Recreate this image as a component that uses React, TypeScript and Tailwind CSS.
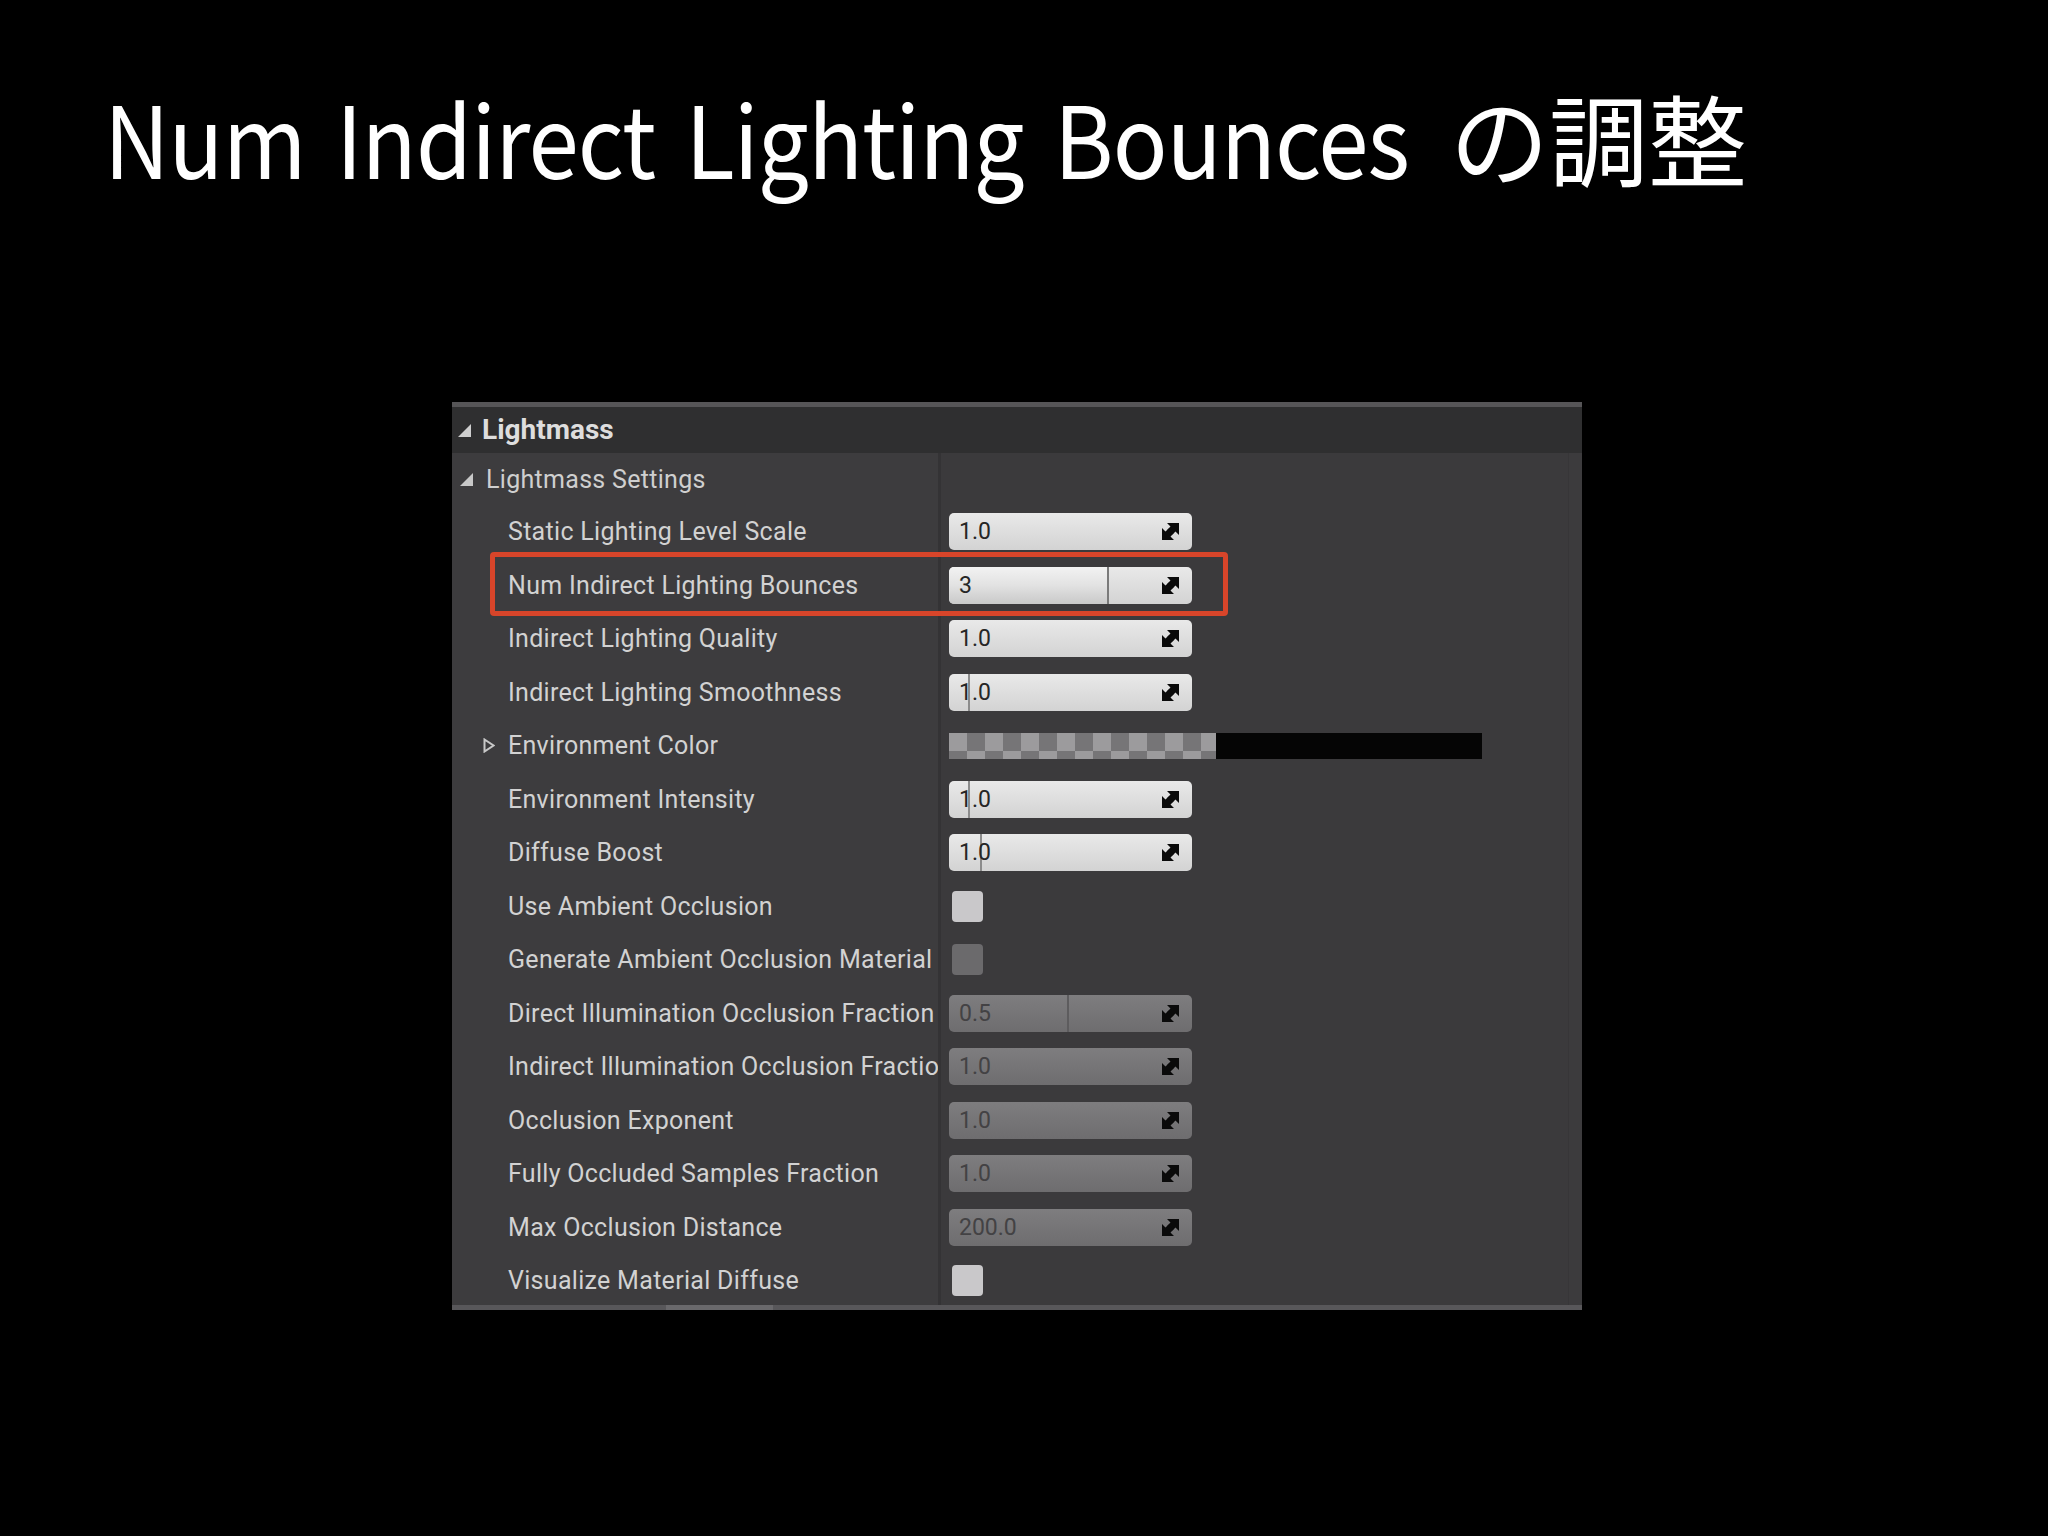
import React from "react";

type Row =
  | { kind: "num"; label: string; value: string; disabled?: boolean; mark?: number; fill?: number }
  | { kind: "check"; label: string; light: boolean }
  | { kind: "color"; label: string };

const rows: Row[] = [
  { kind: "num", label: "Static Lighting Level Scale", value: "1.0" },
  { kind: "num", label: "Num Indirect Lighting Bounces", value: "3", fill: 160 },
  { kind: "num", label: "Indirect Lighting Quality", value: "1.0" },
  { kind: "num", label: "Indirect Lighting Smoothness", value: "1.0", mark: 19 },
  { kind: "color", label: "Environment Color" },
  { kind: "num", label: "Environment Intensity", value: "1.0", mark: 19 },
  { kind: "num", label: "Diffuse Boost", value: "1.0", mark: 31 },
  { kind: "check", label: "Use Ambient Occlusion", light: true },
  { kind: "check", label: "Generate Ambient Occlusion Material", light: false },
  { kind: "num", label: "Direct Illumination Occlusion Fraction", value: "0.5", disabled: true, mark: 118 },
  { kind: "num", label: "Indirect Illumination Occlusion Fraction", value: "1.0", disabled: true },
  { kind: "num", label: "Occlusion Exponent", value: "1.0", disabled: true },
  { kind: "num", label: "Fully Occluded Samples Fraction", value: "1.0", disabled: true },
  { kind: "num", label: "Max Occlusion Distance", value: "200.0", disabled: true },
  { kind: "check", label: "Visualize Material Diffuse", light: true },
];

function DragIcon() {
  return (
    <svg width="19" height="19" viewBox="0 0 19 19" className="shrink-0">
      <polygon points="6,1 18,1 18,13 14.5,9.5 11.5,12.5 6.5,7.5 9.5,4.5" fill="#0a0a0a" />
      <polygon points="1,6 1,18 13,18 9.5,14.5 12.5,11.5 7.5,6.5 4.5,9.5" fill="#0a0a0a" />
    </svg>
  );
}

function NumBox({ value, disabled, mark, fill }: { value: string; disabled?: boolean; mark?: number; fill?: number }) {
  const base = disabled
    ? "bg-gradient-to-b from-[#7e7d7f] to-[#6e6d6f] text-[#434244]"
    : "bg-gradient-to-b from-[#e9e9e9] to-[#d3d3d3] text-[#262626]";
  return (
    <div className={`relative w-[243px] h-[37px] rounded-[5px] overflow-hidden flex items-center ${base}`}>
      {fill !== undefined && (
        <div
          className="absolute left-0 top-0 bottom-0 bg-gradient-to-b from-[#f2f2f2] via-[#e2e2e2] to-[#c9c9c9] border-r-2 border-[#7a7a7a]"
          style={{ width: fill }}
        />
      )}
      {mark !== undefined && (
        <div
          className={`absolute top-0 bottom-0 w-[2px] ${disabled ? "bg-[#5d5c5e]" : "bg-[#8c8c8c]"}`}
          style={{ left: mark }}
        />
      )}
      <span className="relative pl-[10px] text-[23px] leading-none font-['Roboto',sans-serif]">{value}</span>
      <div className="relative ml-auto mr-[12px] flex items-center">
        <DragIcon />
      </div>
    </div>
  );
}

function Checker() {
  const cols = Array.from({ length: 15 }, (_, i) => i);
  return (
    <div className="flex items-center">
      <div className="w-[267px] h-[26px] overflow-hidden flex flex-col">
        <div className="flex h-[18px]">
          {cols.map((i) => (
            <div key={i} className={`w-[18px] h-full shrink-0 ${i % 2 === 0 ? "bg-[#9c9b9d]" : "bg-[#767577]"}`} />
          ))}
        </div>
        <div className="flex h-[8px]">
          {cols.map((i) => (
            <div key={i} className={`w-[18px] h-full shrink-0 ${i % 2 === 0 ? "bg-[#767577]" : "bg-[#9c9b9d]"}`} />
          ))}
        </div>
      </div>
      <div className="w-[266px] h-[26px] bg-[#050505]" />
    </div>
  );
}

export default function App() {
  return (
    <div className="w-[2048px] h-[1536px] bg-black flex flex-col font-['Roboto',sans-serif]">
      <h1 className="pl-[104px] pt-[87px] text-white text-[99px] leading-none font-normal font-['Noto_Sans_CJK_JP',sans-serif] whitespace-nowrap">
        <span className="inline-block w-[1346px] whitespace-nowrap origin-left scale-x-[0.915] tracking-[-0.01em] [word-spacing:0.12em]">
          Num Indirect Lighting Bounces
        </span>
        <span>の調整</span>
      </h1>

      <div className="relative ml-[452px] mt-[216px] w-[1130px] flex flex-col">
        {/* top border */}
        <div className="h-[5px] bg-[#565557]" />
        {/* header */}
        <div className="h-[46px] bg-[#2f2f30] flex items-center">
          <span className="ml-[6px] w-[24px] flex items-center">
            <svg width="13" height="13" viewBox="0 0 13 13">
              <polygon points="13,0 13,13 0,13" fill="#cfcfcf" />
            </svg>
          </span>
          <span className="text-[28px] font-bold text-[#dedede] leading-none">Lightmass</span>
        </div>
        {/* body */}
        <div className="flex bg-[#3b3a3c]">
          <div className="flex-1 flex flex-col">
            {/* settings row */}
            <div className="flex h-[52px]">
              <div className="w-[486px] bg-[#3d3c3e] flex items-center">
                <span className="ml-[8px] w-[26px] flex items-center">
                  <svg width="13" height="13" viewBox="0 0 13 13">
                    <polygon points="13,0 13,13 0,13" fill="#c8c8c8" />
                  </svg>
                </span>
                <span className="text-[25px] tracking-[0.3px] text-[#cfcfcf] leading-none">Lightmass Settings</span>
              </div>
              <div className="w-[3px] bg-[#343335]" />
              <div className="flex-1" />
            </div>
            {/* property rows */}
            <div className="h-[800px] overflow-hidden flex flex-col">
              {rows.map((r, idx) => (
                <div key={idx} className="flex h-[53.5px] shrink-0">
                  <div className="w-[486px] bg-[#3d3c3e] flex items-center overflow-hidden">
                    <span className="w-[56px] shrink-0 flex justify-end pr-[13px]">
                      {r.kind === "color" && (
                        <svg width="12" height="15" viewBox="0 0 12 15">
                          <polygon points="1.5,1.5 10.5,7.5 1.5,13.5" fill="none" stroke="#c8c8c8" strokeWidth="2" />
                        </svg>
                      )}
                    </span>
                    <span className="text-[25px] tracking-[0.3px] text-[#d2d2d2] leading-none whitespace-nowrap">{r.label}</span>
                  </div>
                  <div className="w-[3px] bg-[#343335]" />
                  <div className="flex-1 flex items-center pl-[8px]">
                    {r.kind === "num" && (
                      <NumBox value={r.value} disabled={r.disabled} mark={r.mark} fill={r.fill} />
                    )}
                    {r.kind === "check" && (
                      <div
                        className={`ml-[3px] w-[31px] h-[31px] rounded-[4px] ${r.light ? "bg-[#c9c8ca]" : "bg-[#6b6a6c]"}`}
                      />
                    )}
                    {r.kind === "color" && <Checker />}
                  </div>
                </div>
              ))}
            </div>
          </div>
          <div className="w-[14px] border-l border-[#373638] bg-[#3c3b3d]" />
        </div>
        {/* bottom border */}
        <div className="h-[5px] bg-[#58575a] flex">
          <div className="ml-[214px] w-[107px] h-full bg-[#6a696c]" />
        </div>

        {/* highlight box */}
        <div className="absolute left-[38px] top-[150px] w-[738px] h-[64px] border-[5px] border-[#d8452a] rounded-[4px]" />
      </div>
    </div>
  );
}
